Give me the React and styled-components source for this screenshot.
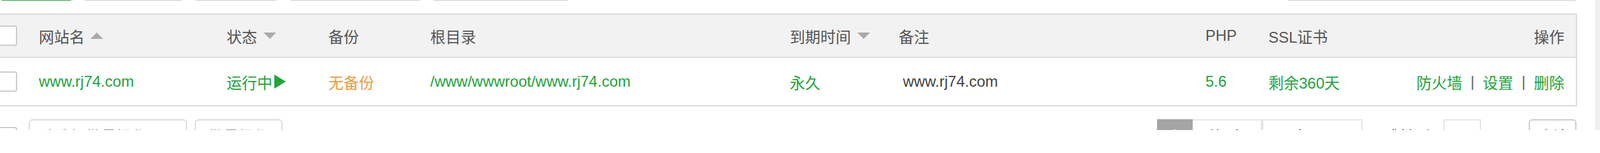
import React from "react";
import styled, { createGlobalStyle } from "styled-components";

const GREEN = "#20a53a";
const LINE = "#dddddd";

const GlobalStyle = createGlobalStyle`
  * { box-sizing: border-box; }
  html, body {
    margin: 0;
    padding: 0;
    overflow: hidden;
    background: #fff;
  }
  body {
    font-family: "Liberation Sans", "Noto Sans CJK SC", sans-serif;
    font-size: 24px;
    color: #555;
  }
`;

const columns = "55px 295px 160px 160px 565px 171px 482px 99px 1fr 320px";

const sites = [
  {
    name: "www.rj74.com",
    status: "运行中",
    backup: "无备份",
    path: "/www/wwwroot/www.rj74.com",
    expire: "永久",
    note: "www.rj74.com",
    php: "5.6",
    ssl: "剩余360天",
  },
];

export default function App() {
  return (
    <>
      <GlobalStyle />
      <Page>
        <Main>
          {/* toolbar, only its bottom edge is in view */}
          <Toolbar>
            <ToolButton $w={114} $primary>添加站点</ToolButton>
            <ToolButton $w={157}>修改默认页</ToolButton>
            <ToolButton $w={132}>默认站点</ToolButton>
            <ToolButton $w={208}>PHP命令行版本</ToolButton>
            <ToolButton $w={216}>HTTPS防窜站</ToolButton>
            <SearchBox placeholder="请输入域名或备注" />
          </Toolbar>

          <Table>
            <GridRow $head>
              <Cell $check>
                <Checkbox />
              </Cell>
              <Cell>
                网站名<SortArrow $up />
              </Cell>
              <Cell>
                状态<SortArrow />
              </Cell>
              <Cell>备份</Cell>
              <Cell>根目录</Cell>
              <Cell>
                到期时间<SortArrow />
              </Cell>
              <Cell>备注</Cell>
              <Cell>PHP</Cell>
              <Cell>SSL证书</Cell>
              <Cell $right>操作</Cell>
            </GridRow>

            {sites.map((s, i) => (
              <GridRow key={i}>
                <Cell $check>
                  <Checkbox />
                </Cell>
                <Cell $color={GREEN}>{s.name}</Cell>
                <Cell $color={GREEN}>
                  {s.status}
                  <PlayIcon />
                </Cell>
                <Cell $color="#ec9a3e">{s.backup}</Cell>
                <Cell $color={GREEN}>{s.path}</Cell>
                <Cell $color={GREEN}>{s.expire}</Cell>
                <Cell $color="#444">&nbsp;{s.note}</Cell>
                <Cell $color={GREEN}>{s.php}</Cell>
                <Cell $color={GREEN}>{s.ssl}</Cell>
                <Cell $right $color={GREEN}>
                  防火墙<Sep>|</Sep>设置<Sep>|</Sep>删除
                </Cell>
              </GridRow>
            ))}
          </Table>

          <Footer>
            <FooterLeft>
              <Checkbox $offset />
              <BatchSelect>请选择批量操作</BatchSelect>
              <BatchButton>批量操作</BatchButton>
            </FooterLeft>
            <Pager>
              <PageCurrent>1</PageCurrent>
              <PageBox $w={109} $first>共1条</PageBox>
              <PageBox $w={158}>
                20条/页<Caret />
              </PageBox>
              <PagerText $ml={34}>跳转到</PagerText>
              <JumpInput defaultValue="" />
              <PagerText $ml={18}>页</PagerText>
              <ConfirmButton>确认</ConfirmButton>
            </Pager>
          </Footer>
        </Main>
        <ScrollTrack />
      </Page>
    </>
  );
}

const Page = styled.div`
  display: flex;
  width: 100%;
  height: 204px;
  overflow: hidden;
`;

const Main = styled.div`
  flex: 1;
  min-width: 0;
  margin-left: -16px;
  padding-right: 29px;
`;

const ScrollTrack = styled.div`
  flex: none;
  width: 7px;
  background: #f1f1f1;
  border-left: 1px solid #e4e4e4;
`;

const Toolbar = styled.div`
  display: flex;
  align-items: flex-end;
  gap: 17px;
  height: 60px;
  margin-top: -59px;
  padding-left: 16px;
`;

const ToolButton = styled.button`
  width: ${(p) => p.$w}px;
  height: 60px;
  padding: 0;
  border-radius: 4px;
  border: 1px solid ${(p) => (p.$primary ? GREEN : "#cccccc")};
  background: ${(p) => (p.$primary ? GREEN : "#fff")};
  color: ${(p) => (p.$primary ? "#fff" : "#555")};
  font-family: inherit;
  font-size: 24px;
`;

const SearchBox = styled.input`
  margin-left: auto;
  width: 457px;
  height: 60px;
  border: 1px solid #cccccc;
  border-radius: 4px;
  padding: 0 16px;
  font-family: inherit;
  font-size: 24px;
`;

const Table = styled.div`
  margin-top: 20px;
  border: 2px solid ${LINE};
`;

const GridRow = styled.div`
  display: grid;
  grid-template-columns: ${columns};
  height: ${(p) => (p.$head ? "68px" : "74px")};
  background: ${(p) => (p.$head ? "#f2f2f2" : "#fff")};
  border-bottom: ${(p) => (p.$head ? `2px solid ${LINE}` : "none")};
`;

const Cell = styled.div`
  display: flex;
  align-items: center;
  justify-content: ${(p) => (p.$right ? "flex-end" : "flex-start")};
  padding: ${(p) => (p.$check ? "0 0 0 9px" : p.$right ? "0 18px 0 0" : "0 20px")};
  white-space: nowrap;
  color: ${(p) => p.$color || "#555"};
`;

const Checkbox = styled.span`
  display: inline-block;
  flex: none;
  width: 32px;
  height: 32px;
  border: 2px solid #cccccc;
  border-radius: 4px;
  background: #fff;
  margin-top: ${(p) => (p.$offset ? "12px" : "0")};
`;

const SortArrow = styled.span`
  display: inline-block;
  width: 0;
  height: 0;
  margin-left: ${(p) => (p.$up ? "9px" : "10px")};
  border-left: 10px solid transparent;
  border-right: 10px solid transparent;
  ${(p) =>
    p.$up ? "border-bottom: 10px solid #aaaaaa;" : "border-top: 10px solid #aaaaaa;"}
`;

const PlayIcon = styled.span`
  display: inline-block;
  width: 0;
  height: 0;
  margin-left: 3px;
  border-top: 11px solid transparent;
  border-bottom: 11px solid transparent;
  border-left: 18px solid ${GREEN};
`;

const Sep = styled.span`
  margin: 0 13px;
  color: #666;
`;

const Footer = styled.div`
  display: flex;
  align-items: flex-start;
  justify-content: space-between;
  margin-top: 20px;
  padding-left: 11px;
`;

const FooterLeft = styled.div`
  display: flex;
  align-items: flex-start;
`;

const BatchSelect = styled.div`
  width: 249px;
  height: 50px;
  margin-left: 18px;
  padding-left: 16px;
  display: flex;
  align-items: center;
  border: 2px solid #dddddd;
  border-radius: 6px;
  color: #999;
`;

const BatchButton = styled.div`
  width: 138px;
  height: 50px;
  margin-left: 12px;
  display: flex;
  align-items: center;
  justify-content: center;
  border: 2px solid #dddddd;
  border-radius: 6px;
  color: #999;
`;

const Pager = styled.div`
  display: flex;
  align-items: flex-start;
  margin-right: 1px;
`;

const PageCurrent = styled.span`
  width: 56px;
  height: 50px;
  display: flex;
  align-items: center;
  justify-content: center;
  background: #a5a5a5;
  color: #fff;
`;

const PageBox = styled.span`
  width: ${(p) => p.$w}px;
  height: 50px;
  display: flex;
  align-items: center;
  justify-content: center;
  gap: 10px;
  border: 2px solid #e6e6e6;
  border-left: ${(p) => (p.$first ? "none" : "2px solid #e6e6e6")};
  color: #555;
`;

const Caret = styled.span`
  width: 20px;
  height: 14px;
  background: #e2e2e2;
`;

const PagerText = styled.span`
  margin-left: ${(p) => p.$ml}px;
  height: 50px;
  display: flex;
  align-items: center;
  color: #555;
`;

const JumpInput = styled.input`
  width: 59px;
  height: 50px;
  margin-left: 21px;
  border: 2px solid #e6e6e6;
  font-family: inherit;
  font-size: 24px;
`;

const ConfirmButton = styled.span`
  width: 75px;
  height: 50px;
  margin-left: 33px;
  display: flex;
  align-items: center;
  justify-content: center;
  border: 2px solid #cccccc;
  border-radius: 6px;
  color: #555;
`;
